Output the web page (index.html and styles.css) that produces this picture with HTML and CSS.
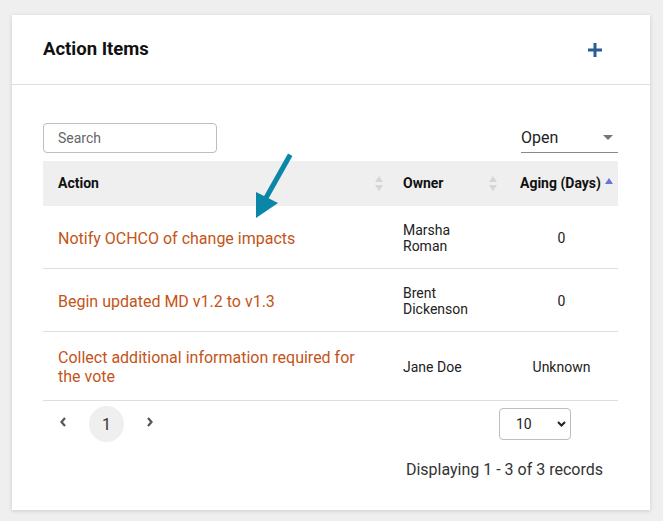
FILE: index.html
```html
<!DOCTYPE html>
<html lang="en">
<head>
    <meta charset="UTF-8">
    <meta name="viewport" content="width=device-width, initial-scale=1.0">
    <title>Action Items</title>
    <link rel="stylesheet" href="styles.css">
</head>
<body>
    <div class="card">
        <div class="card-header">
            <h2>Action Items</h2>
            <button class="add-btn" title="Add">
                <svg width="14" height="14" viewBox="0 0 14 14"><path d="M7 0v14M0 7h14" stroke="#2a5d92" stroke-width="3"/></svg>
            </button>
        </div>

        <div class="card-body">
            <div class="toolbar">
                <input class="search" type="text" placeholder="Search">
                <div class="status-select">
                    <span>Open</span>
                    <svg width="10" height="5" viewBox="0 0 10 5"><path d="M0 0h10L5 5z" fill="#777"/></svg>
                </div>
            </div>

            <table class="items">
                <colgroup>
                    <col class="col-action">
                    <col class="col-owner">
                    <col class="col-aging">
                </colgroup>
                <thead>
                    <tr>
                        <th>
                            <div class="th-inner">
                                <span>Action</span>
                                <svg class="sort" width="8" height="15" viewBox="0 0 8 15"><path d="M0 6L4 0L8 6zM0 9L4 15L8 9z" fill="#d6d6d6"/></svg>
                            </div>
                        </th>
                        <th>
                            <div class="th-inner">
                                <span>Owner</span>
                                <svg class="sort" width="8" height="15" viewBox="0 0 8 15"><path d="M0 6L4 0L8 6zM0 9L4 15L8 9z" fill="#d6d6d6"/></svg>
                            </div>
                        </th>
                        <th class="th-aging">
                            <div class="th-inner active">
                                <span>Aging (Days)</span>
                                <svg class="sort" width="8" height="7" viewBox="0 0 8 7"><path d="M0 6L4 0L8 6z" fill="#6a72d8"/></svg>
                            </div>
                        </th>
                    </tr>
                </thead>
                <tbody>
                    <tr>
                        <td><a href="#" class="action-link">Notify OCHCO of change impacts</a></td>
                        <td class="owner">Marsha Roman</td>
                        <td class="aging">0</td>
                    </tr>
                    <tr>
                        <td><a href="#" class="action-link">Begin updated MD v1.2 to v1.3</a></td>
                        <td class="owner">Brent Dickenson</td>
                        <td class="aging">0</td>
                    </tr>
                    <tr>
                        <td><a href="#" class="action-link">Collect additional information required for the vote</a></td>
                        <td class="owner">Jane Doe</td>
                        <td class="aging">Unknown</td>
                    </tr>
                </tbody>
            </table>

            <div class="table-footer">
                <div class="pager">
                    <button class="pager-arrow">
                        <svg width="6" height="10" viewBox="0 0 6 10"><path d="M5 1L1.5 5L5 9" fill="none" stroke="#555" stroke-width="2.2"/></svg>
                    </button>
                    <button class="page current">1</button>
                    <button class="pager-arrow">
                        <svg width="6" height="10" viewBox="0 0 6 10"><path d="M1 1L4.5 5L1 9" fill="none" stroke="#555" stroke-width="2.2"/></svg>
                    </button>
                </div>
                <div class="footer-right">
                    <div class="per-page">
                        <span>10</span>
                        <svg width="9" height="6" viewBox="0 0 9 6"><path d="M1 1L4.5 4.5L8 1" fill="none" stroke="#222" stroke-width="2"/></svg>
                    </div>
                    <div class="records">Displaying 1 - 3 of 3 records</div>
                </div>
            </div>
        </div>

        <!-- callout arrow -->
        <svg class="callout" width="60" height="75" viewBox="0 0 60 75">
            <path d="M49 7L27 46" stroke="#0a86a7" stroke-width="5" stroke-linecap="square"/>
            <path d="M16 42L38 53L16 68z" fill="#0a86a7"/>
        </svg>
    </div>
</body>
</html>
```

FILE: styles.css
```css
body {
    font-family: Roboto, "Liberation Sans", Arial, sans-serif;
    background: #efefef;
    margin: 0;
    padding: 15px 13px 11px 12px;
    color: #222;
}

.card {
    position: relative;
    background: white;
    box-shadow: 0 1px 4px rgba(0,0,0,0.15);
}

.card-header {
    height: 69px;
    display: flex;
    justify-content: space-between;
    align-items: center;
    padding: 0 48px 0 31px;
    border-bottom: 1px solid #dedee3;
}

.card-header h2 {
    margin: 0 0 2px;
    font-size: 18.5px;
    font-weight: bold;
    color: #111;
}

.add-btn {
    background: none;
    border: none;
    padding: 0;
    display: flex;
    cursor: pointer;
}

.card-body {
    padding: 38px 32px 31px 31px;
}

.toolbar {
    display: flex;
    justify-content: space-between;
    align-items: flex-start;
    height: 30px;
}

.search {
    box-sizing: border-box;
    width: 174px;
    height: 30px;
    border: 1px solid #bdbdbd;
    border-radius: 4px;
    padding: 0 14px;
    font-family: inherit;
    font-size: 14px;
    color: #333;
    outline: none;
}

.search::placeholder {
    color: #666;
}

.status-select {
    box-sizing: border-box;
    width: 97px;
    height: 30px;
    display: flex;
    justify-content: space-between;
    align-items: center;
    padding: 0 5px 1px 0;
    border-bottom: 1px solid #8a8a8a;
    font-size: 16px;
    color: #222;
}

.items {
    width: 100%;
    margin-top: 8px;
    border-collapse: collapse;
    table-layout: fixed;
}

.col-action { width: 345px; }
.col-owner { width: 117px; }
.col-aging { width: 113px; }

.items th {
    background: #efefef;
    padding: 14px 5px 14px 15px;
    line-height: 17px;
    font-size: 14px;
    font-weight: bold;
    color: #111;
    text-align: left;
}

.items th:nth-child(2) {
    padding-right: 8px;
}

.th-inner {
    display: flex;
    justify-content: space-between;
    align-items: center;
}

.th-inner.active {
    justify-content: flex-start;
    gap: 4px;
}

.th-inner.active .sort {
    margin-top: -5px;
}

.items td {
    padding: 16px 20px 14px 15px;
    border-bottom: 1px solid #dedede;
    vertical-align: middle;
    font-size: 14px;
    line-height: 16px;
}

.items td.owner {
    padding-right: 30px;
    color: #222;
}

.items td.aging {
    text-align: center;
    padding: 16px 0 14px;
    color: #222;
}

.action-link {
    color: #c45418;
    text-decoration: none;
    font-size: 16px;
    line-height: 19px;
}

.table-footer {
    display: flex;
    justify-content: space-between;
    align-items: flex-start;
}

.pager {
    display: flex;
    align-items: center;
    gap: 14px;
    margin-top: 5px;
    padding-left: 8px;
}

.pager button {
    background: none;
    border: none;
    padding: 0;
    font-family: inherit;
    cursor: pointer;
}

.pager-arrow {
    width: 24px;
    height: 36px;
    display: flex;
    justify-content: center;
    align-items: center;
    margin-top: -5px;
}

.page {
    width: 35px;
    height: 36px;
    border-radius: 50%;
    font-size: 16px;
    color: #333;
}

.page.current {
    background: #efefef !important;
}

.footer-right {
    display: flex;
    flex-direction: column;
    align-items: flex-end;
    margin-right: 15px;
}

.per-page {
    box-sizing: border-box;
    width: 72px;
    height: 32px;
    margin-top: 7px;
    margin-right: 32px;
    border: 1px solid #bdbdbd;
    border-radius: 4px;
    display: flex;
    justify-content: space-between;
    align-items: center;
    padding: 0 4px 0 16px;
    font-size: 14px;
    color: #222;
}

.records {
    margin-top: 20px;
    font-size: 16px;
    line-height: 19px;
    color: #333;
}

.callout {
    position: absolute;
    left: 228px;
    top: 135px;
}
```
